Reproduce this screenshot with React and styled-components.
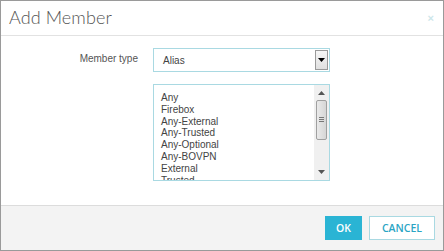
import React from "react";
import styled, { createGlobalStyle } from "styled-components";

const Global = createGlobalStyle`
  html, body { margin: 0; padding: 0; background: #fff; }
  body { width: 444px; height: 251px; overflow: hidden; }
  * { box-sizing: border-box; }
`;

const Dialog = styled.div`
  width: 444px;
  height: 251px;
  border: 1px solid #9a9a9a;
  display: flex;
  flex-direction: column;
  background: #fff;
`;

const Header = styled.div`
  height: 35px;
  border-bottom: 1px solid #e2e2e2;
  display: flex;
  align-items: center;
  justify-content: space-between;
  padding: 0 9px 2px 8px;
`;

const Title = styled.h1`
  margin: 0;
  font-family: "Lato", "Open Sans", sans-serif;
  font-weight: 300;
  font-size: 18px;
  color: #555;
  letter-spacing: 0.1px;
`;

const Close = styled.span`
  font-family: "Liberation Sans", Arial, sans-serif;
  font-size: 11px;
  color: #cde6ea;
  font-weight: bold;
  margin-top: 2px;
`;

const Body = styled.div`
  flex: 1;
  display: grid;
  grid-template-columns: 137px 177px;
  column-gap: 15px;
  row-gap: 12px;
  align-content: start;
  padding: 12px 0 0 0;
`;

const Label = styled.div`
  font-family: "Liberation Sans", Arial, sans-serif;
  font-size: 10px;
  color: #555;
  text-align: right;
  padding-top: 5px;
`;

const Select = styled.div`
  height: 24px;
  border: 1px solid #a9d9e2;
  display: flex;
  align-items: center;
  justify-content: space-between;
  padding: 0 1px 0 9px;
  font-family: "Liberation Sans", Arial, sans-serif;
  font-size: 10px;
  color: #444;
`;

const DropButton = styled.div`
  width: 13px;
  height: 20px;
  border: 1px solid #9a9a9a;
  background: linear-gradient(#f6f6f6, #e0e0e0);
  display: flex;
  align-items: center;
  justify-content: center;
`;

const ListBox = styled.div`
  height: 97px;
  border: 1px solid #a9d9e2;
  display: flex;
  overflow: hidden;
`;

const Items = styled.ul`
  flex: 1;
  list-style: none;
  margin: 0;
  padding: 7px 0 0 7px;
  font-family: "Liberation Sans", Arial, sans-serif;
  font-size: 10px;
  line-height: 11.8px;
  color: #444;
  overflow: hidden;
`;

const Scrollbar = styled.div`
  width: 15px;
  background: #f0f0f0;
  display: flex;
  flex-direction: column;
  align-items: center;
  padding: 1px 0;
`;

const Arrow = styled.div`
  height: 14px;
  display: flex;
  align-items: center;
  justify-content: center;
`;

const Track = styled.div`
  flex: 1;
  width: 100%;
  display: flex;
  flex-direction: column;
  align-items: center;
`;

const Thumb = styled.div`
  width: 11px;
  height: 40px;
  border: 1px solid #a0a0a0;
  border-radius: 2px;
  background: linear-gradient(90deg, #eaeaea, #d6d6d6);
  display: flex;
  align-items: center;
  justify-content: center;
`;

const Footer = styled.div`
  height: 45px;
  margin-top: auto;
  border-top: 1px solid #dcdcdc;
  background: #f3f3f3;
  display: flex;
  justify-content: flex-end;
  align-items: center;
  gap: 7px;
  padding: 0 8px 0 0;
`;

const Button = styled.button`
  height: 24px;
  padding: 0 ${(p) => (p.$primary ? "10px" : "12px")};
  font-family: "Open Sans", sans-serif;
  font-weight: 600;
  font-size: 10.5px;
  border: 1px solid ${(p) => (p.$primary ? "#2ab4d4" : "#a9d9e2")};
  background: ${(p) => (p.$primary ? "#2ab4d4" : "#fff")};
  color: ${(p) => (p.$primary ? "#fff" : "#2aa5c4")};
  cursor: pointer;
`;

const items = [
  "Any",
  "Firebox",
  "Any-External",
  "Any-Trusted",
  "Any-Optional",
  "Any-BOVPN",
  "External",
  "Trusted",
];

export default function App() {
  return (
    <>
      <Global />
      <Dialog>
        <Header>
          <Title>Add Member</Title>
          <Close>×</Close>
        </Header>
        <Body>
          <Label>Member type</Label>
          <Select>
            <span>Alias</span>
            <DropButton>
              <svg width="7" height="4" viewBox="0 0 7 4">
                <path d="M0 0H7L3.5 4Z" fill="#000" />
              </svg>
            </DropButton>
          </Select>
          <div />
          <ListBox>
            <Items>
              {items.map((i) => (
                <li key={i}>{i}</li>
              ))}
            </Items>
            <Scrollbar>
              <Arrow>
                <svg width="7" height="4" viewBox="0 0 7 4">
                  <path d="M0 4H7L3.5 0Z" fill="#555" />
                </svg>
              </Arrow>
              <Track>
                <Thumb>
                  <svg width="5" height="6" viewBox="0 0 5 6">
                    <path d="M0 0.5H5M0 2.5H5M0 4.5H5" stroke="#777" strokeWidth="1" />
                  </svg>
                </Thumb>
              </Track>
              <Arrow>
                <svg width="7" height="4" viewBox="0 0 7 4">
                  <path d="M0 0H7L3.5 4Z" fill="#555" />
                </svg>
              </Arrow>
            </Scrollbar>
          </ListBox>
        </Body>
        <Footer>
          <Button $primary>OK</Button>
          <Button>CANCEL</Button>
        </Footer>
      </Dialog>
    </>
  );
}
